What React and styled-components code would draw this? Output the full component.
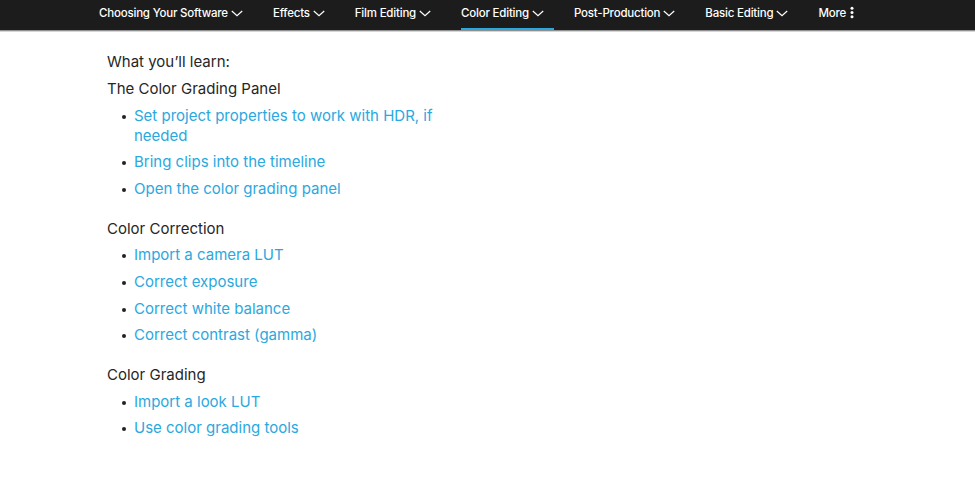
import React from "react";
import styled, { createGlobalStyle } from "styled-components";

const Global = createGlobalStyle`
  html, body { margin: 0; padding: 0; background: #ffffff; }
  body { font-family: Inter, "Noto Sans", Arial, sans-serif; }
  * { box-sizing: border-box; }
`;

const NavBar = styled.nav`
  height: 31px;
  background: #1c1c1c;
  border-bottom: 1px solid #8f8f8f;
  box-shadow: 0 1px 0 #d6d6d6;
  display: flex;
  align-items: stretch;
  padding-left: 99px;
  gap: 20px;
`;

const NavItem = styled.div`
  position: relative;
  display: flex;
  align-items: center;
  gap: 3px;
  height: 30px;
  padding: 0 10px 5px 0;
  color: #ffffff;
  font-family: Inter, Arial, sans-serif;
  font-size: 11.5px;
  letter-spacing: -0.2px;
  font-weight: 500;
  white-space: nowrap;
  ${(p) =>
    p.$active &&
    `
    &::after {
      content: "";
      position: absolute;
      left: 0;
      right: 0;
      bottom: 0;
      height: 2px;
      background: #2aa8de;
    }
  `}
`;

const Chevron = () => (
  <svg width="12" height="7" viewBox="0 0 12 7" style={{ marginTop: 2 }}>
    <path d="M0.8 1 L6 5.8 L11.2 1" fill="none" stroke="#fff" strokeWidth="1.2" />
  </svg>
);

const Kebab = () => (
  <svg width="4" height="13" viewBox="0 0 4 13" style={{ marginLeft: 1 }}>
    <circle cx="2" cy="2.2" r="1.5" fill="#fff" />
    <circle cx="2" cy="6.5" r="1.5" fill="#fff" />
    <circle cx="2" cy="10.8" r="1.5" fill="#fff" />
  </svg>
);

const Content = styled.main`
  padding: 21px 0 40px 107px;
  width: 447px;
  color: #262626;
  font-family: Inter, Arial, sans-serif;
  font-size: 15px;
  line-height: 20px;
`;

const Intro = styled.p`
  margin: 0;
`;

const Section = styled.section`
  margin-top: ${(p) => (p.$first ? "7px" : "20px")};
`;

const Heading = styled.h3`
  margin: 0;
  font-size: 15px;
  font-weight: 400;
  line-height: 20px;
`;

const List = styled.ul`
  margin: 0;
  padding: 0;
  list-style: none;
`;

const Item = styled.li`
  position: relative;
  margin-top: 6.6px;
  padding-left: 27px;
  &::before {
    content: "";
    position: absolute;
    left: 15px;
    top: 9px;
    width: 4px;
    height: 4px;
    border-radius: 50%;
    background: #222;
  }
`;

const Link = styled.a`
  color: #2aa8e0;
  text-decoration: none;
`;

const nav = [
  "Choosing Your Software",
  "Effects",
  "Film Editing",
  "Color Editing",
  "Post-Production",
  "Basic Editing",
];

const sections = [
  {
    title: "The Color Grading Panel",
    items: [
      "Set project properties to work with HDR, if needed",
      "Bring clips into the timeline",
      "Open the color grading panel",
    ],
  },
  {
    title: "Color Correction",
    items: [
      "Import a camera LUT",
      "Correct exposure",
      "Correct white balance",
      "Correct contrast (gamma)",
    ],
  },
  {
    title: "Color Grading",
    items: ["Import a look LUT", "Use color grading tools"],
  },
];

export default function App() {
  return (
    <>
      <Global />
      <NavBar>
        {nav.map((n) => (
          <NavItem key={n} $active={n === "Color Editing"}>
            {n}
            <Chevron />
          </NavItem>
        ))}
        <NavItem>
          More
          <Kebab />
        </NavItem>
      </NavBar>
      <Content>
        <Intro>What you’ll learn:</Intro>
        {sections.map((s, i) => (
          <Section key={s.title} $first={i === 0}>
            <Heading>{s.title}</Heading>
            <List>
              {s.items.map((it) => (
                <Item key={it}>
                  <Link href="#">{it}</Link>
                </Item>
              ))}
            </List>
          </Section>
        ))}
      </Content>
    </>
  );
}
